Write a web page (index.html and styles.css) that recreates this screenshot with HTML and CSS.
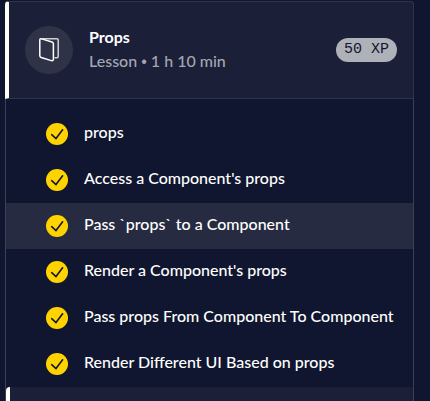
FILE: index.html
```html
<!DOCTYPE html>
<html lang="en">
<head>
<meta charset="utf-8">
<meta name="viewport" content="width=device-width, initial-scale=1">
<title>Props</title>
<link rel="stylesheet" href="styles.css">
</head>
<body>
<svg class="symbols" aria-hidden="true">
  <symbol id="check" viewBox="0 0 22 22">
    <circle cx="11" cy="11" r="11" fill="#ffd300"/>
    <path d="M5.7 11.700 10 15.600 16.600 6.800" fill="none" stroke="#10162f" stroke-width="1.6" stroke-linecap="round" stroke-linejoin="round"/>
  </symbol>
</svg>
<main class="syllabus">
  <section>
    <header class="module">
      <span class="module-icon">
        <svg width="24" height="26" viewBox="0 0 24 26" fill="none" stroke-width="1.5" stroke-linejoin="round" aria-hidden="true">
          <path d="M4.5 1.8H20q1.2 0 1.2 1.200V19.600q0 1.200-1.200 1.200H17.500" stroke="#cfd0d5"/>
          <path d="M2.8 3.2Q2.8 1.4 4.6 1.9L15 5Q16.4 5.400 16.400 6.800V22Q16.400 24.200 14.400 23.600L4.200 20.500Q2.800 20 2.800 18.500Z" stroke="#fff"/>
        </svg>
      </span>
      <div class="module-text">
        <h2>Props</h2>
        <p>Lesson <span class="dot">•</span> 1 h 10 min</p>
      </div>
      <span class="xp">50 XP</span>
    </header>
    <ul class="exercises">
      <li><a href="#"><svg class="check"><use href="#check"/></svg>props</a></li>
      <li><a href="#"><svg class="check"><use href="#check"/></svg>Access a Component's props</a></li>
      <li><a href="#" class="current"><svg class="check"><use href="#check"/></svg>Pass `props` to a Component</a></li>
      <li><a href="#"><svg class="check"><use href="#check"/></svg>Render a Component's props</a></li>
      <li><a href="#"><svg class="check"><use href="#check"/></svg>Pass props From Component To Component</a></li>
      <li><a href="#"><svg class="check"><use href="#check"/></svg>Render Different UI Based on props</a></li>
    </ul>
  </section>
  <section class="next-module"></section>
</main>
</body>
</html>
```
FILE: styles.css
```css
* {
  box-sizing: border-box;
}

body {
  margin: 0;
  padding: 1px 16px 0 5px;
  min-height: 100vh;
  display: flex;
  background: #10162f;
  color: #fff;
  font: 500 16px/24px Lato, "Liberation Sans", sans-serif;
}

.symbols {
  position: absolute;
  width: 0;
  height: 0;
}

.syllabus {
  flex: 1;
  min-width: 0;
  display: flex;
  flex-direction: column;
  border: solid #3c4056;
  border-width: 0 1px;
  border-radius: 4px 4px 0 0;
}

.module {
  display: flex;
  align-items: center;
  gap: 16px;
  margin: 0 -1px;
  padding: 24px 16px;
  border: 1px solid #30344b;
  border-left: 4px solid #fff;
  border-radius: 4px 4px 0 0;
  background: #1b1f38;
}

.module-icon {
  flex: none;
  display: grid;
  place-items: center;
  width: 48px;
  height: 48px;
  border-radius: 50%;
  background: #303348;
}

.module-text {
  flex: 1;
  align-self: flex-start;
  min-width: 0;
  margin-top: -1px;
}

h2,
p {
  margin: 0;
  font-size: 16px;
}

p {
  color: #a5a7b1;
}

.dot {
  font-family: "Liberation Sans", sans-serif;
  line-height: 1;
}

.xp {
  padding: 0 8px;
  border-radius: 12px;
  background: #afb1b8;
  color: #10162f;
  font: 15px/24px "Liberation Mono", monospace;
  white-space: nowrap;
}

.exercises {
  margin: 0;
  padding: 12px 0 0;
  list-style: none;
}

.exercises a {
  display: flex;
  align-items: flex-start;
  gap: 16px;
  padding: 9px 0 12px 40px;
  color: inherit;
  text-decoration: none;
  white-space: nowrap;
}

.exercises .current {
  background: #272b41;
}

.check {
  flex: none;
  width: 22px;
  height: 22px;
  margin-top: 3px;
}

.next-module {
  flex: 1;
  border-left: 4px solid #fff;
  border-radius: 4px 0 0 0;
  background: #1b1f38;
}
```
